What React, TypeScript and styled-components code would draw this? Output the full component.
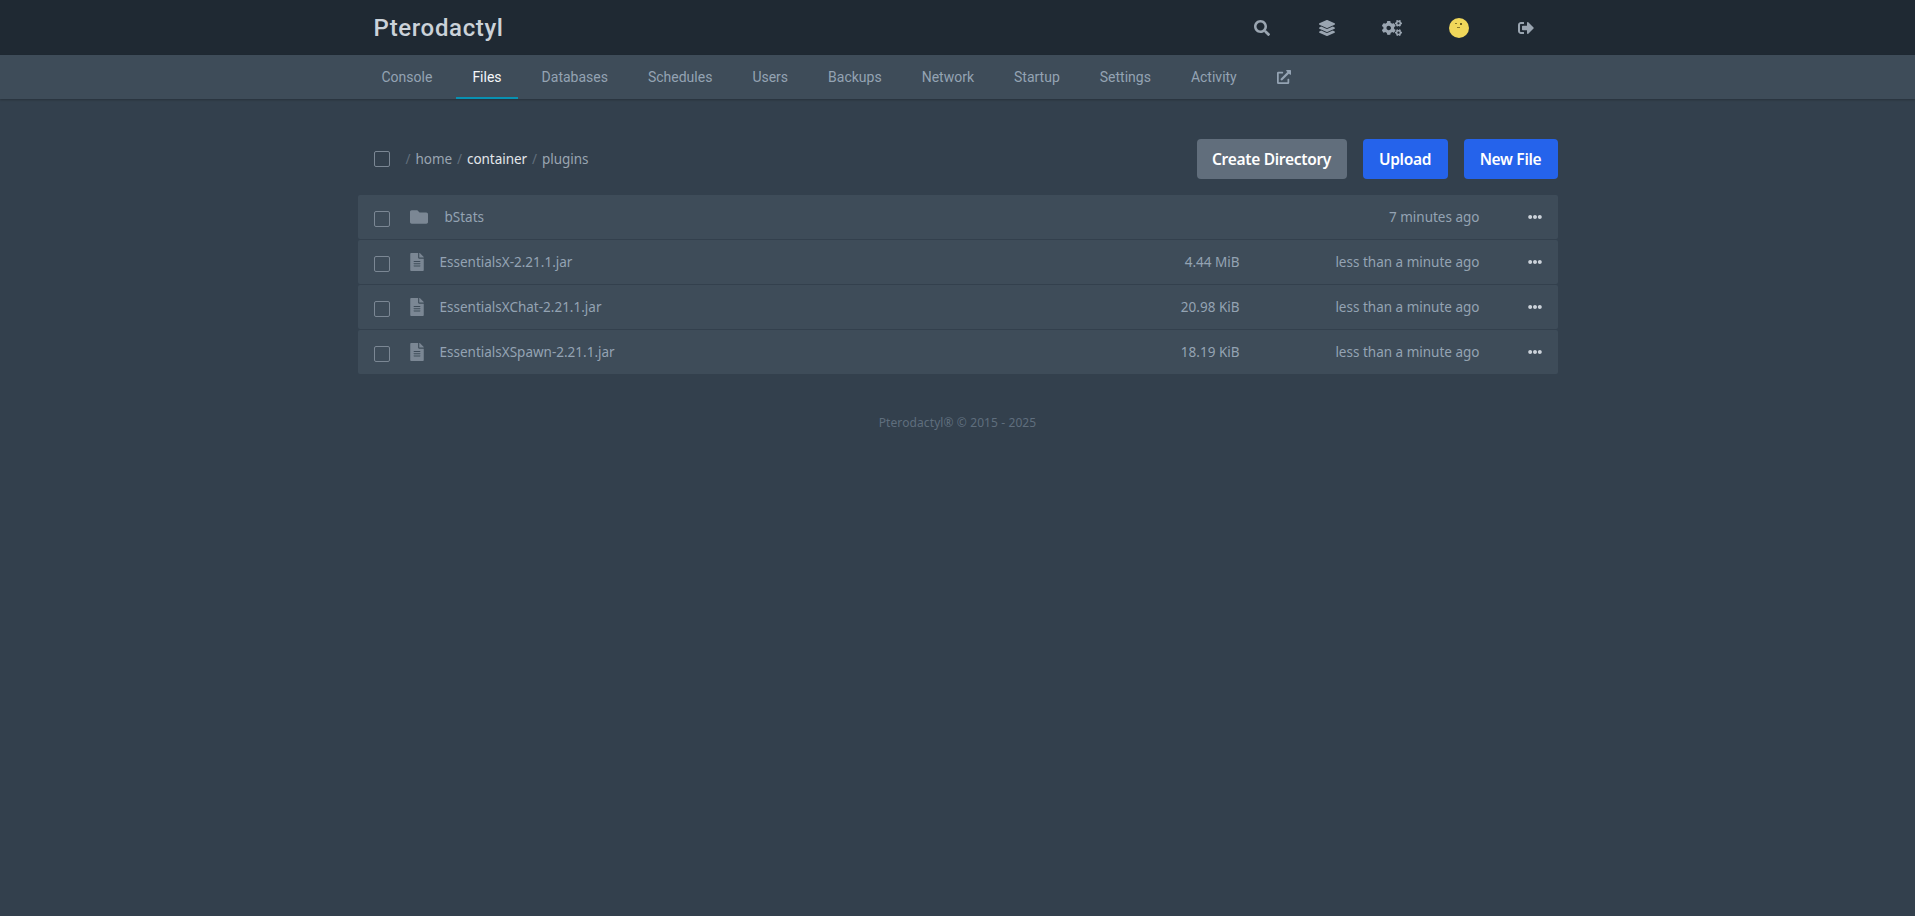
import React, { FC } from 'react';
import styled, { createGlobalStyle } from 'styled-components';
import { FaCogs, FaEllipsisH, FaExternalLinkAlt, FaFileAlt, FaFolder, FaLayerGroup, FaSearch, FaSignOutAlt } from 'react-icons/fa';

const BODY_FONT = '"Noto Sans", "Open Sans", sans-serif';
const HEAD_FONT = 'Roboto, "Noto Sans", sans-serif';

const GlobalStyle = createGlobalStyle`
  html, body {
    margin: 0;
    min-height: 100%;
    background: #33404d;
  }
  * { box-sizing: border-box; }
`;

const Page = styled.div`
  min-height: 916px;
  background: #33404d;
  font-family: ${HEAD_FONT};
`;

const TopBar = styled.header`
  height: 55px;
  background: #1f2933;
  box-shadow: 0 1px 3px rgba(0, 0, 0, 0.3);
`;

const Wrap = styled.div`
  width: 1200px;
  margin: 0 auto;
`;

const TopInner = styled(Wrap)`
  display: flex;
  align-items: center;
  height: 100%;
`;

const Logo = styled.div`
  flex: 1;
  padding-left: 16px;
  color: #cbd2d9;
  font-size: 24px;
  font-weight: 500;
  letter-spacing: 0.65px;
`;

const TopIcons = styled.div`
  display: flex;
  align-items: center;
  margin-right: -1px;
`;

const TopIcon = styled.div<{ $wide?: boolean }>`
  display: flex;
  align-items: center;
  justify-content: center;
  width: ${({ $wide }) => ($wide ? 69 : 65)}px;
  height: 55px;
  color: #9aa5b1;
  font-size: 16px;
`;

const NavBar = styled.nav`
  height: 44px;
  background: #3e4c59;
  box-shadow: 0 1px 2px rgba(0, 0, 0, 0.25);
`;

const NavInner = styled(Wrap)`
  display: flex;
  padding-left: 8px;
  gap: 8px;
`;

const NavItem = styled.a<{ $active?: boolean }>`
  display: flex;
  align-items: center;
  height: 44px;
  padding: 2px 16px 0;
  font-size: 14px;
  color: ${({ $active }) => ($active ? '#f5f7fa' : '#94a3b3')};
  border-bottom: 2px solid ${({ $active }) => ($active ? '#0891b2' : 'transparent')};
`;

const Main = styled(Wrap)`
  padding-top: 40px;
`;

const Toolbar = styled.div`
  display: flex;
  align-items: center;
  justify-content: space-between;
  height: 40px;
  padding-left: 16px;
  margin-bottom: 16px;
`;

const Crumbs = styled.div`
  display: flex;
  align-items: center;
  font-family: ${BODY_FONT};
  font-size: 13.5px;
  letter-spacing: -0.05px;
  color: #9aa5b1;
`;

const Sep = styled.span`
  color: #616e7c;
  margin: 0 5px;
`;

const Current = styled.span`
  color: #e4e7eb;
`;

const Check = styled.span`
  display: block;
  flex: none;
  width: 16px;
  height: 16px;
  border: 1px solid #7b8794;
  border-radius: 2px;
`;

const CrumbTrail = styled.div`
  margin-left: 11px;
`;

const Buttons = styled.div`
  display: flex;
  gap: 16px;
`;

const Button = styled.button<{ $secondary?: boolean; $width: number }>`
  width: ${({ $width }) => $width}px;
  height: 40px;
  padding: 0;
  border: 0;
  border-radius: 4px;
  font-family: ${BODY_FONT};
  font-size: 15.5px;
  letter-spacing: -0.3px;
  font-weight: 600;
  color: #fff;
  background: ${({ $secondary }) => ($secondary ? '#616e7c' : '#2563eb')};
`;

const List = styled.div`
  display: flex;
  flex-direction: column;
  gap: 1px;
`;

const Row = styled.div`
  display: flex;
  align-items: center;
  height: 44px;
  padding-left: 16px;
  background: #3e4c59;
  border-radius: 2px;
  font-family: ${BODY_FONT};
  font-size: 13.5px;
  color: #94a3b3;
`;

const RowCheck = styled(Check)`
  margin-top: 4px;
`;

const KindIcon = styled.span<{ $dir?: boolean }>`
  display: flex;
  align-items: center;
  justify-content: center;
  margin-left: 20px;
  width: ${({ $dir }) => ($dir ? 18 : 14)}px;
  margin-right: ${({ $dir }) => ($dir ? 17 : 16)}px;
  font-size: 18px;
  color: #7b8794;
  margin-top: -1px;
`;

const Name = styled.span`
  flex: 1;
  margin-top: -1px;
`;

const Size = styled.span`
  width: 150px;
  text-align: right;
  margin-top: -1px;
`;

const When = styled.span`
  width: 240px;
  margin-right: 32px;
  text-align: right;
  margin-top: -1px;
`;

const More = styled.span`
  display: flex;
  justify-content: center;
  width: 46px;
  font-size: 14px;
  color: #cbd2d9;
  margin-top: -1px;
`;

const Footer = styled.p`
  margin: 40px 0 0;
  text-align: center;
  font-family: ${BODY_FONT};
  font-size: 12px;
  letter-spacing: 0.1px;
  color: #5f6e7d;
`;

const Avatar: FC = () => (
  <svg width="20" height="20" viewBox="0 0 20 20">
    <circle cx="10" cy="10" r="10" fill="#f0d75a" />
    <rect x="6" y="5" width="2" height="1" fill="#8a7a2a" />
    <rect x="11" y="5" width="2" height="2" fill="#6e6122" />
    <rect x="8" y="9" width="3" height="1" fill="#8a7a2a" />
  </svg>
);

const TABS = ['Console', 'Files', 'Databases', 'Schedules', 'Users', 'Backups', 'Network', 'Startup', 'Settings', 'Activity'];

const FILES = [
  { name: 'bStats', dir: true, size: '', when: '7 minutes ago' },
  { name: 'EssentialsX-2.21.1.jar', size: '4.44 MiB', when: 'less than a minute ago' },
  { name: 'EssentialsXChat-2.21.1.jar', size: '20.98 KiB', when: 'less than a minute ago' },
  { name: 'EssentialsXSpawn-2.21.1.jar', size: '18.19 KiB', when: 'less than a minute ago' },
];

const App: FC = () => (
  <Page>
    <GlobalStyle />
    <TopBar>
      <TopInner>
        <Logo>Pterodactyl</Logo>
        <TopIcons>
          <TopIcon><FaSearch /></TopIcon>
          <TopIcon><FaLayerGroup /></TopIcon>
          <TopIcon><FaCogs size={20} /></TopIcon>
          <TopIcon $wide><Avatar /></TopIcon>
          <TopIcon><FaSignOutAlt /></TopIcon>
        </TopIcons>
      </TopInner>
    </TopBar>
    <NavBar>
      <NavInner>
        {TABS.map(tab => (
          <NavItem key={tab} $active={tab === 'Files'}>{tab}</NavItem>
        ))}
        <NavItem><FaExternalLinkAlt /></NavItem>
      </NavInner>
    </NavBar>
    <Main>
      <Toolbar>
        <Crumbs>
          <Check />
          <CrumbTrail>
            <Sep>/</Sep>home<Sep>/</Sep><Current>container</Current><Sep>/</Sep>plugins
          </CrumbTrail>
        </Crumbs>
        <Buttons>
          <Button $secondary $width={150}>Create Directory</Button>
          <Button $width={85}>Upload</Button>
          <Button $width={94}>New File</Button>
        </Buttons>
      </Toolbar>
      <List>
        {FILES.map(file => (
          <Row key={file.name}>
            <RowCheck />
            <KindIcon $dir={file.dir}>{file.dir ? <FaFolder /> : <FaFileAlt />}</KindIcon>
            <Name>{file.name}</Name>
            <Size>{file.size}</Size>
            <When>{file.when}</When>
            <More><FaEllipsisH /></More>
          </Row>
        ))}
      </List>
      <Footer>Pterodactyl® © 2015 - 2025</Footer>
    </Main>
  </Page>
);

export default App;
